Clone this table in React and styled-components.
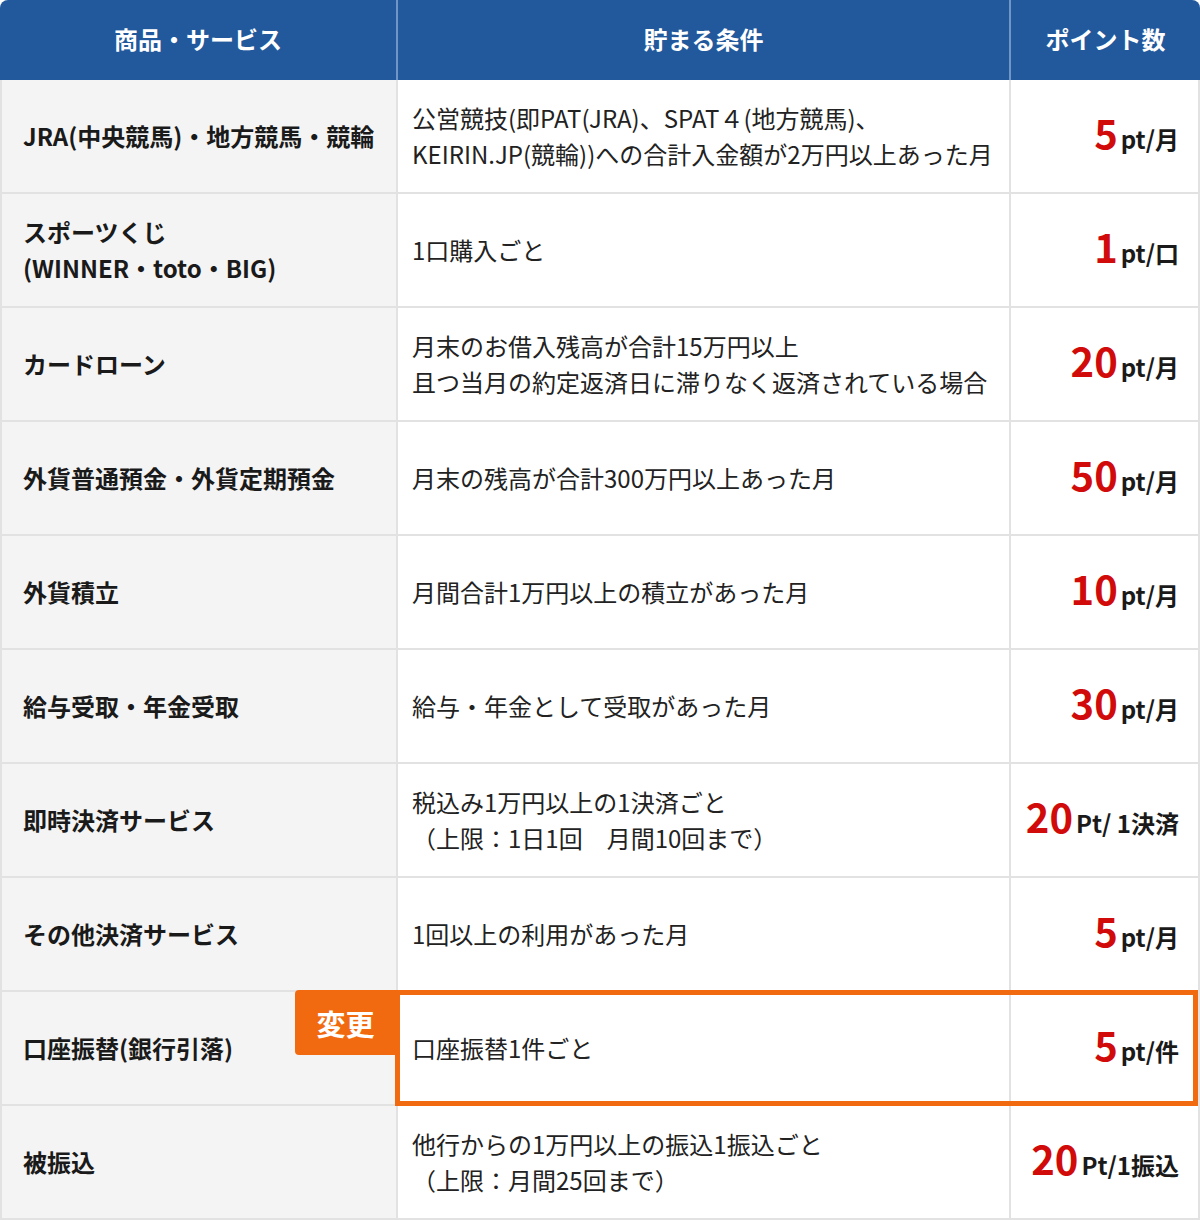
import React from 'react'
import styled, { createGlobalStyle } from 'styled-components'

const GlobalStyle = createGlobalStyle`
    body {
        margin: 0;
        background: #fff;
        font-family: "Noto Sans CJK JP", "Noto Sans", sans-serif;
        color: #1a1a1a;
    }
`

const rows = [
    { name: ['JRA(中央競馬)・地方競馬・競輪'], cond: ['公営競技(即PAT(JRA)、SPAT４(地方競馬)、', 'KEIRIN.JP(競輪))への合計入金額が2万円以上あった月'], num: '5', unit: 'pt/月' },
    { name: ['スポーツくじ', '(WINNER・toto・BIG)'], cond: ['1口購入ごと'], num: '1', unit: 'pt/口' },
    { name: ['カードローン'], cond: ['月末のお借入残高が合計15万円以上', '且つ当月の約定返済日に滞りなく返済されている場合'], num: '20', unit: 'pt/月' },
    { name: ['外貨普通預金・外貨定期預金'], cond: ['月末の残高が合計300万円以上あった月'], num: '50', unit: 'pt/月' },
    { name: ['外貨積立'], cond: ['月間合計1万円以上の積立があった月'], num: '10', unit: 'pt/月' },
    { name: ['給与受取・年金受取'], cond: ['給与・年金として受取があった月'], num: '30', unit: 'pt/月' },
    { name: ['即時決済サービス'], cond: ['税込み1万円以上の1決済ごと', '（上限：1日1回　月間10回まで）'], num: '20', unit: 'Pt/ 1決済' },
    { name: ['その他決済サービス'], cond: ['1回以上の利用があった月'], num: '5', unit: 'pt/月' },
    { name: ['口座振替(銀行引落)'], cond: ['口座振替1件ごと'], num: '5', unit: 'pt/件', changed: true },
    { name: ['被振込'], cond: ['他行からの1万円以上の振込1振込ごと', '（上限：月間25回まで）'], num: '20', unit: 'Pt/1振込' },
]

function App() {
    return (
        <>
            <GlobalStyle />
            <Table>
                <Header>
                    <HeadCell>商品・サービス</HeadCell>
                    <HeadCell divider>貯まる条件</HeadCell>
                    <HeadCell divider>ポイント数</HeadCell>
                </Header>
                {rows.map((r, i) => (
                    <Row key={i}>
                        <NameCell>
                            {r.name.map((l, j) => <div key={j}>{l}</div>)}
                        </NameCell>
                        <CondCell>
                            {r.cond.map((l, j) => <div key={j}>{l}</div>)}
                        </CondCell>
                        <PointCell>
                            <Num>{r.num}</Num>
                            <Unit>{r.unit}</Unit>
                        </PointCell>
                        {r.changed && (
                            <>
                                <Frame />
                                <Badge>変更</Badge>
                            </>
                        )}
                    </Row>
                ))}
            </Table>
        </>
    )
}

export default App

const Table = styled.div`
    width: 1200px;
    display: flex;
    flex-direction: column;
`
const Header = styled.div`
    display: grid;
    grid-template-columns: 396px 613px 1fr;
    height: 80px;
    background: #22599c;
    border-radius: 8px 8px 0 0;
`
const HeadCell = styled.div`
    display: flex;
    align-items: center;
    justify-content: center;
    padding-bottom: 3px;
    color: #fff;
    font-size: 24px;
    font-weight: 700;
    border-left: ${props => props.divider ? '2px solid #7096c6' : 'none'};
`
const Row = styled.div`
    position: relative;
    display: grid;
    grid-template-columns: 394px 613px 1fr;
    height: 112px;
    border: 2px solid #e2e2e2;
    border-top: none;
`
const NameCell = styled.div`
    display: flex;
    flex-direction: column;
    justify-content: center;
    padding-left: 21px;
    background: #f4f4f4;
    font-size: 24px;
    font-weight: 700;
    line-height: 36px;
    color: #1a1a1a;
`
const CondCell = styled.div`
    display: flex;
    flex-direction: column;
    justify-content: center;
    padding-left: 14px;
    border-left: 2px solid #e2e2e2;
    font-size: 24px;
    font-weight: 400;
    line-height: 36px;
    color: #222;
    white-space: nowrap;
`
const PointCell = styled.div`
    display: flex;
    align-items: baseline;
    justify-content: flex-end;
    align-content: center;
    flex-wrap: wrap;
    gap: 3px;
    padding: 0 19px 5px 0;
    border-left: 2px solid #e2e2e2;
    white-space: nowrap;
`
const Num = styled.span`
    font-size: 40px;
    font-weight: 700;
    color: #d10a0a;
    line-height: 1;
`
const Unit = styled.span`
    font-size: 24px;
    font-weight: 700;
    color: #1a1a1a;
`
const Frame = styled.div`
    position: absolute;
    left: 393px;
    right: 0;
    top: -2px;
    bottom: -2px;
    border: 5px solid #f26a10;
    pointer-events: none;
`
const Badge = styled.div`
    position: absolute;
    left: 293px;
    top: -2px;
    width: 101px;
    height: 65px;
    display: flex;
    align-items: center;
    justify-content: center;
    background: #f26a10;
    color: #fff;
    font-size: 29px;
    font-weight: 700;
    border-radius: 4px 0 0 4px;
`
